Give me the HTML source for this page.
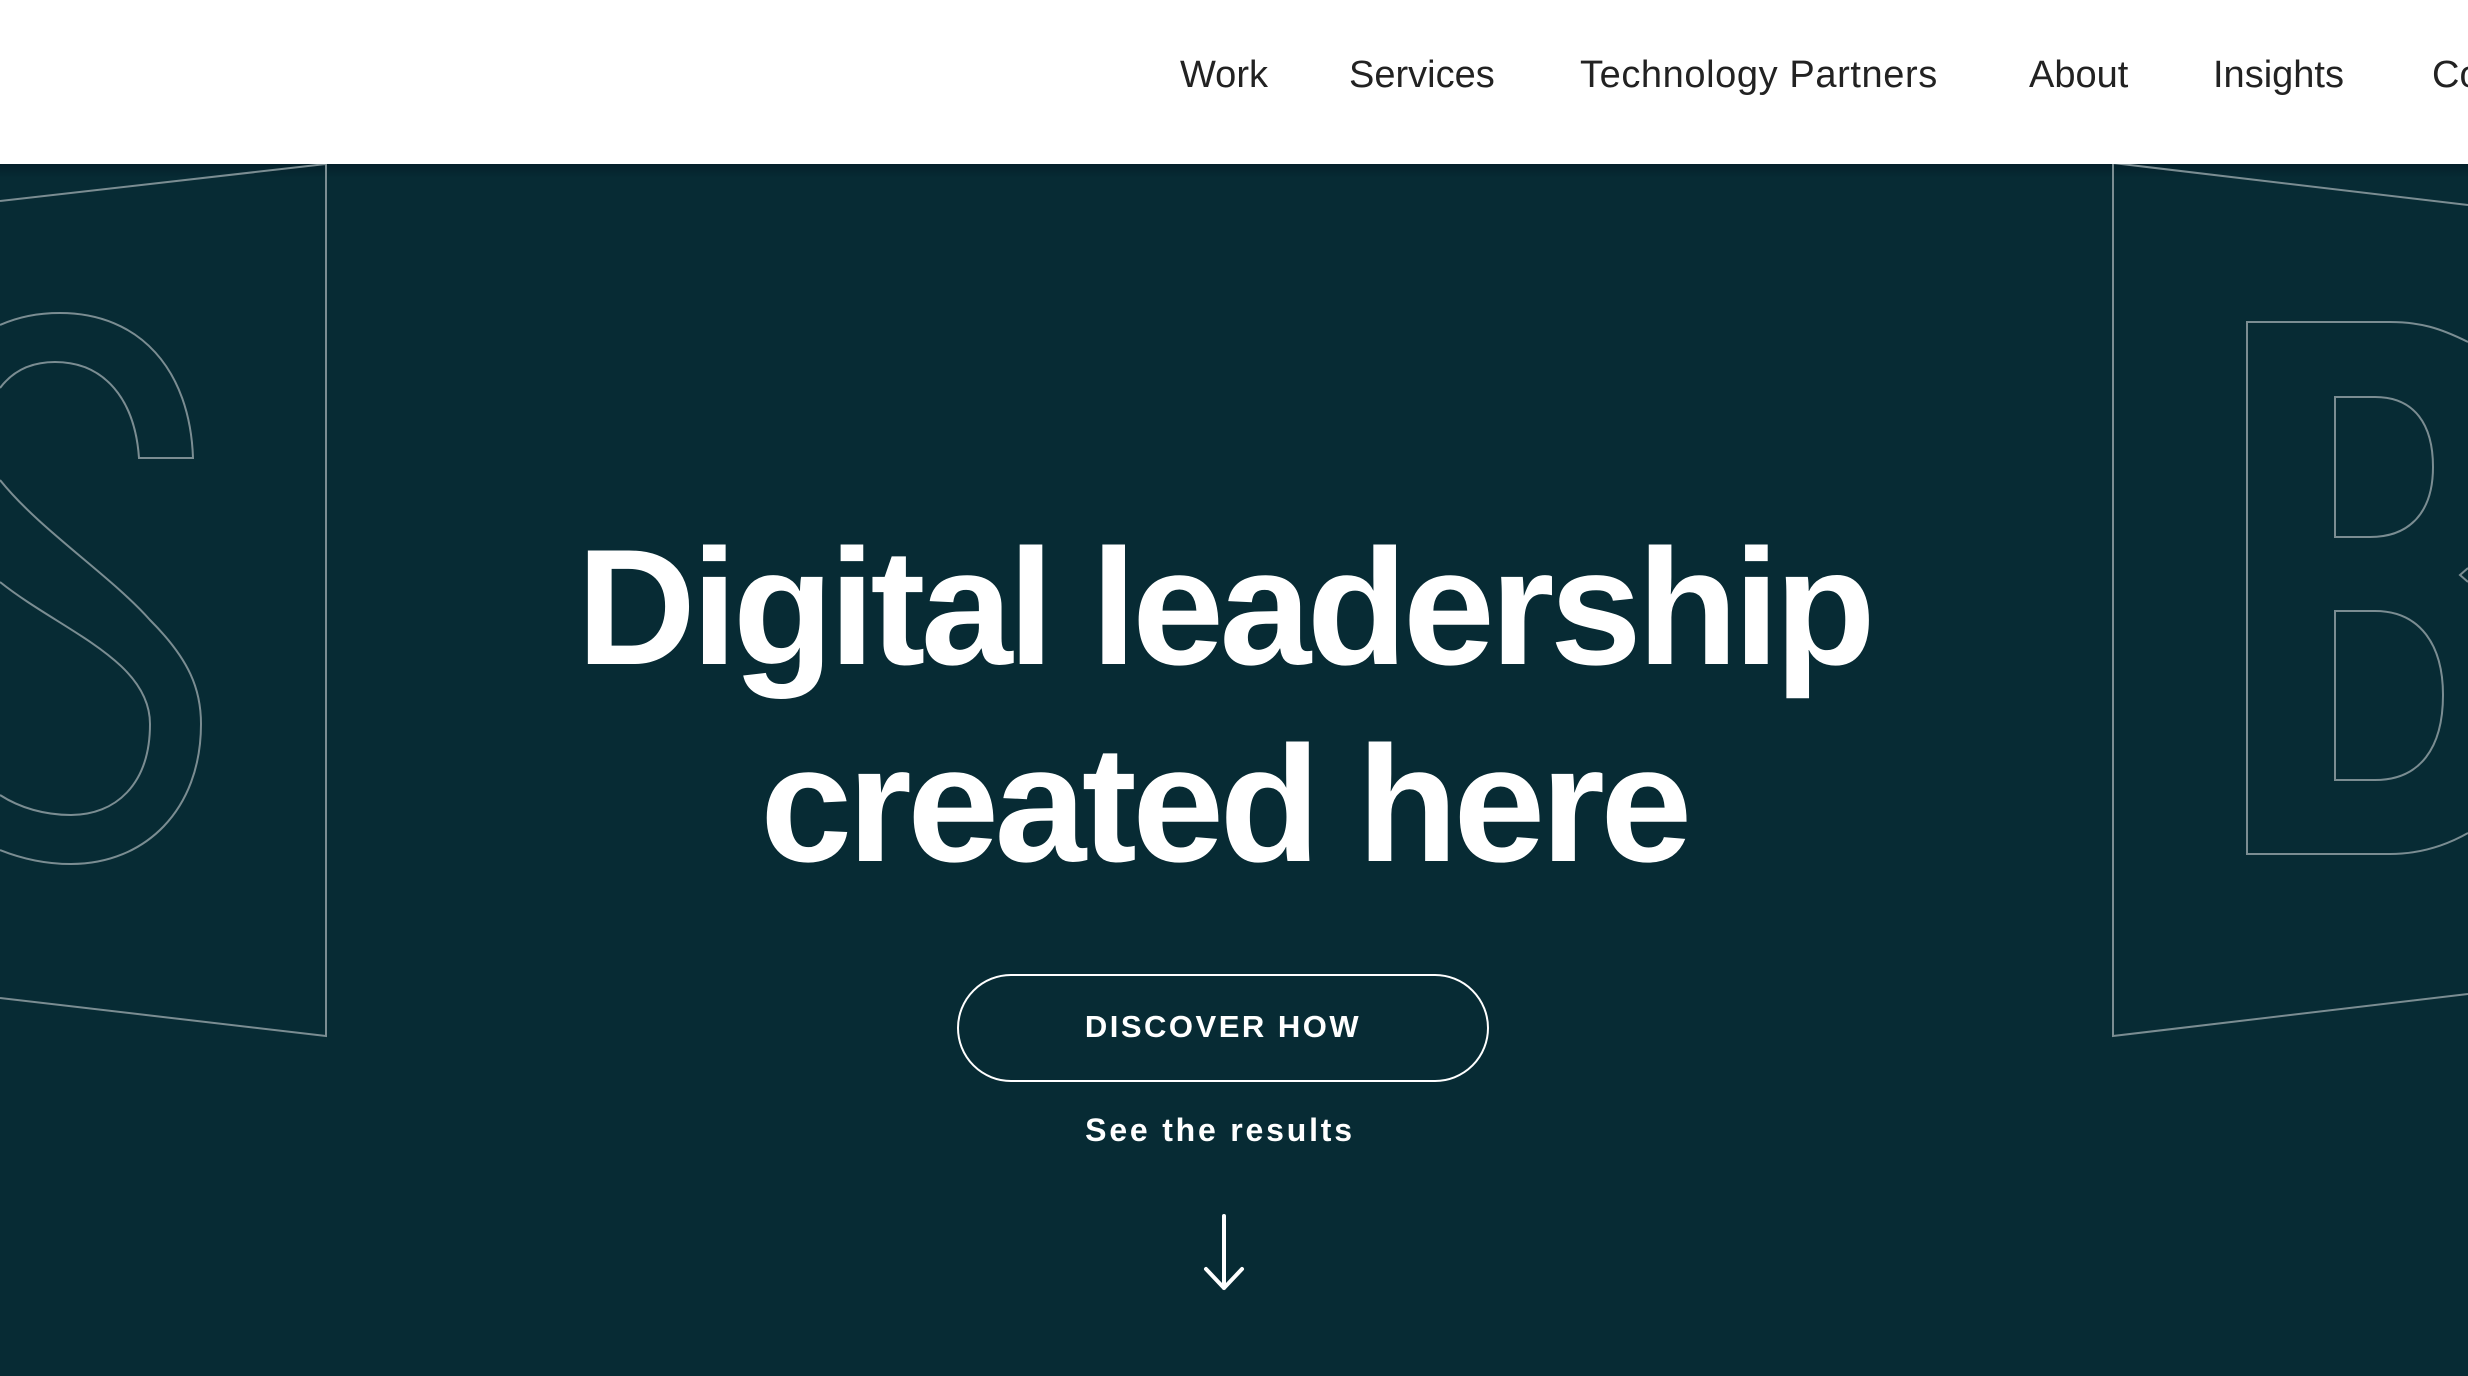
<!DOCTYPE html>
<html><head><meta charset="utf-8"><style>
html,body{margin:0;padding:0;width:2468px;height:1376px;overflow:hidden;background:#072b34;font-family:"Liberation Sans",sans-serif}
.nav{position:absolute;left:0;top:0;width:2468px;height:164px;background:#fff;z-index:2}
.nav span{position:absolute;top:53px;font-size:38px;color:#222;white-space:nowrap;line-height:44px}
.shadow{position:absolute;left:0;top:164px;width:2468px;height:14px;background:linear-gradient(#04202a,rgba(7,43,52,0))}
svg{position:absolute;left:0;top:0}
.h{position:absolute;left:-10px;width:2468px;text-align:center;color:#fff;font-weight:bold;font-size:165px;letter-spacing:-4.5px;white-space:nowrap}
.btn{position:absolute;left:957px;top:974px;width:528px;height:104px;border:2px solid #fff;border-radius:54px;box-sizing:content-box}
.btn span{position:absolute;left:0;right:0;top:33px;text-align:center;color:#fff;font-weight:bold;font-size:31px;letter-spacing:2.5px;line-height:36px}
.see{position:absolute;left:0;width:2440px;text-align:center;top:1112px;color:#fff;font-weight:bold;font-size:32px;letter-spacing:2.8px;line-height:36px}
</style></head><body>
<div class="nav">
<span style="left:1180px">Work</span>
<span style="left:1349px">Services</span>
<span style="left:1580px;letter-spacing:0.6px">Technology Partners</span>
<span style="left:2029px">About</span>
<span style="left:2213px">Insights</span>
<span style="left:2432px">Co</span>
</div>
<div class="shadow"></div>
<svg width="2468" height="1376" viewBox="0 0 2468 1376" fill="none" stroke="#7b8d92" stroke-width="2">
<path d="M0,201 L326,164 L326,1036 L0,998"/>
<path d="M0,325 C20,316 40,313 60,313 C140,313 190,370 193,458 L139,458 C135,400 105,362 55,362 C30,362 12,372 0,388"/>
<path d="M0,480 C40,530 110,575 150,620 C190,660 201,690 201,724 C201,810 145,864 71,864 C45,864 20,858 0,850"/>
<path d="M0,582 C60,630 150,660 150,724 C150,785 115,815 71,815 C45,815 20,808 0,795"/>
<path d="M2468,205 L2113,163 L2113,1036 L2468,994"/>
<path d="M2468,342 C2440,328 2420,322 2390,322 L2247,322 L2247,854 L2390,854 C2420,854 2445,846 2468,833"/>
<path d="M2335,397 L2375,397 C2415,397 2433,425 2433,467 C2433,512 2410,537 2370,537 L2335,537 Z"/>
<path d="M2335,611 L2375,611 C2420,611 2443,645 2443,695 C2443,748 2420,780 2375,780 L2335,780 Z"/>
<path d="M2468,568 L2460,575 L2468,582"/>
</svg>
<div class="h" style="top:522px;line-height:170px">Digital leadership</div>
<div class="h" style="top:719px;line-height:170px">created here</div>
<div class="btn"><span>DISCOVER HOW</span></div>
<div class="see">See the results</div>
<svg width="2468" height="1376" viewBox="0 0 2468 1376" fill="none" stroke="#fff" stroke-width="4" stroke-linecap="round" stroke-linejoin="round">
<path d="M1224,1216 L1224,1288 M1206,1269 L1224,1288 L1242,1269"/>
</svg>
</body></html>
